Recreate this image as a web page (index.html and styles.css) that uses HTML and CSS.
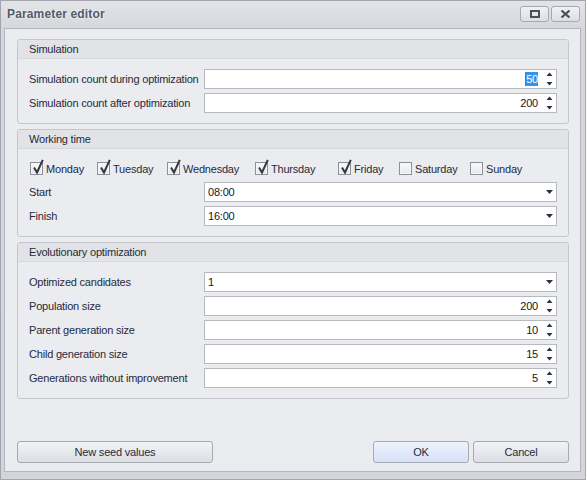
FILE: index.html
```html
<!DOCTYPE html>
<html>
<head>
<meta charset="utf-8">
<title>Parameter editor</title>
<link rel="stylesheet" href="styles.css">
</head>
<body>
<div class="window">
  <div class="titlebar">
    <span class="title">Parameter editor</span>
    <div class="tbuttons">
      <div class="tbtn"><svg width="10" height="8" viewBox="0 0 10 8"><rect x="1" y="1" width="8" height="6" fill="none" stroke="#4c515c" stroke-width="2"/></svg></div>
      <div class="tbtn"><svg width="11" height="8" viewBox="0 0 11 8"><path d="M1.5 0.5 L9.5 7.5 M9.5 0.5 L1.5 7.5" stroke="#4c515c" stroke-width="2.2" fill="none"/></svg></div>
    </div>
  </div>
  <div class="client">
    <section class="group">
      <div class="group-header">Simulation</div>
      <div class="group-body">
        <div class="row">
          <label class="lbl">Simulation count during optimization</label>
          <div class="field">
            <span class="value num"><span class="sel">50</span></span>
            <span class="spin"><svg width="7" height="14" viewBox="0 0 7 14"><path d="M3.5 0.5 L6.5 4 L0.5 4 Z M0.5 10 L6.5 10 L3.5 13.5 Z" fill="#2e323a"/></svg></span>
          </div>
        </div>
        <div class="row">
          <label class="lbl">Simulation count after optimization</label>
          <div class="field">
            <span class="value num">200</span>
            <span class="spin"><svg width="7" height="14" viewBox="0 0 7 14"><path d="M3.5 0.5 L6.5 4 L0.5 4 Z M0.5 10 L6.5 10 L3.5 13.5 Z" fill="#2e323a"/></svg></span>
          </div>
        </div>
      </div>
    </section>

    <section class="group">
      <div class="group-header">Working time</div>
      <div class="group-body">
        <div class="days">
          <div class="check on"><span class="box"></span><svg class="tick" width="16" height="16" viewBox="0 0 16 16"><path d="M4 8.5 L7 13.5 L12.8 0.8" stroke="#353942" stroke-width="2" fill="none"/></svg><span>Monday</span></div>
          <div class="check on"><span class="box"></span><svg class="tick" width="16" height="16" viewBox="0 0 16 16"><path d="M4 8.5 L7 13.5 L12.8 0.8" stroke="#353942" stroke-width="2" fill="none"/></svg><span>Tuesday</span></div>
          <div class="check on"><span class="box"></span><svg class="tick" width="16" height="16" viewBox="0 0 16 16"><path d="M4 8.5 L7 13.5 L12.8 0.8" stroke="#353942" stroke-width="2" fill="none"/></svg><span>Wednesday</span></div>
          <div class="check on"><span class="box"></span><svg class="tick" width="16" height="16" viewBox="0 0 16 16"><path d="M4 8.5 L7 13.5 L12.8 0.8" stroke="#353942" stroke-width="2" fill="none"/></svg><span>Thursday</span></div>
          <div class="check on"><span class="box"></span><svg class="tick" width="16" height="16" viewBox="0 0 16 16"><path d="M4 8.5 L7 13.5 L12.8 0.8" stroke="#353942" stroke-width="2" fill="none"/></svg><span>Friday</span></div>
          <div class="check"><span class="box"></span><span>Saturday</span></div>
          <div class="check"><span class="box"></span><span>Sunday</span></div>
        </div>
        <div class="row">
          <label class="lbl">Start</label>
          <div class="field">
            <span class="value">08:00</span>
            <span class="drop"><svg width="7" height="4" viewBox="0 0 7 4"><path d="M0 0 L7 0 L3.5 4 Z" fill="#2e323a"/></svg></span>
          </div>
        </div>
        <div class="row">
          <label class="lbl">Finish</label>
          <div class="field">
            <span class="value">16:00</span>
            <span class="drop"><svg width="7" height="4" viewBox="0 0 7 4"><path d="M0 0 L7 0 L3.5 4 Z" fill="#2e323a"/></svg></span>
          </div>
        </div>
      </div>
    </section>

    <section class="group">
      <div class="group-header">Evolutionary optimization</div>
      <div class="group-body">
        <div class="row">
          <label class="lbl">Optimized candidates</label>
          <div class="field">
            <span class="value">1</span>
            <span class="drop"><svg width="7" height="4" viewBox="0 0 7 4"><path d="M0 0 L7 0 L3.5 4 Z" fill="#2e323a"/></svg></span>
          </div>
        </div>
        <div class="row">
          <label class="lbl">Population size</label>
          <div class="field">
            <span class="value num">200</span>
            <span class="spin"><svg width="7" height="14" viewBox="0 0 7 14"><path d="M3.5 0.5 L6.5 4 L0.5 4 Z M0.5 10 L6.5 10 L3.5 13.5 Z" fill="#2e323a"/></svg></span>
          </div>
        </div>
        <div class="row">
          <label class="lbl">Parent generation size</label>
          <div class="field">
            <span class="value num">10</span>
            <span class="spin"><svg width="7" height="14" viewBox="0 0 7 14"><path d="M3.5 0.5 L6.5 4 L0.5 4 Z M0.5 10 L6.5 10 L3.5 13.5 Z" fill="#2e323a"/></svg></span>
          </div>
        </div>
        <div class="row">
          <label class="lbl">Child generation size</label>
          <div class="field">
            <span class="value num">15</span>
            <span class="spin"><svg width="7" height="14" viewBox="0 0 7 14"><path d="M3.5 0.5 L6.5 4 L0.5 4 Z M0.5 10 L6.5 10 L3.5 13.5 Z" fill="#2e323a"/></svg></span>
          </div>
        </div>
        <div class="row">
          <label class="lbl">Generations without improvement</label>
          <div class="field">
            <span class="value num">5</span>
            <span class="spin"><svg width="7" height="14" viewBox="0 0 7 14"><path d="M3.5 0.5 L6.5 4 L0.5 4 Z M0.5 10 L6.5 10 L3.5 13.5 Z" fill="#2e323a"/></svg></span>
          </div>
        </div>
      </div>
    </section>

    <div class="buttons">
      <button class="btn seed">New seed values</button>
      <div class="spacer"></div>
      <button class="btn ok">OK</button>
      <button class="btn cancel">Cancel</button>
    </div>
  </div>
</div>
</body>
</html>
```

FILE: styles.css
```css
* { box-sizing: border-box; }

html, body {
  margin: 0;
  padding: 0;
  background: #d4d6db;
}

body {
  font-family: "Liberation Sans", Arial, sans-serif;
  font-size: 11px;
  letter-spacing: -0.2px;
  color: #1f2b40;
}

.window {
  width: 586px;
  height: 480px;
  border: 1px solid #a3a6ae;
  background: linear-gradient(#e2e4e8, #d5d7dc 28px, #d3d5da);
  padding: 0 4px 7px 3px;
  display: flex;
  flex-direction: column;
}

.titlebar {
  height: 27px;
  flex: none;
  display: flex;
  align-items: flex-start;
  padding: 0 1px 0 3px;
}

.title {
  font-size: 12px;
  font-weight: bold;
  letter-spacing: 0.15px;
  color: #535a69;
  line-height: 27px;
  text-shadow: 0 0 3px rgba(255,255,255,0.9);
}

.tbuttons {
  margin-left: auto;
  margin-top: 5px;
  display: flex;
  gap: 2px;
}

.tbtn {
  width: 29px;
  height: 16px;
  border: 1px solid #a5a9b1;
  border-radius: 3px;
  background: linear-gradient(#f1f2f4, #dcdee3);
  display: flex;
  align-items: center;
  justify-content: center;
}

.client {
  flex: 1;
  border: 1px solid #b3b6bd;
  background: #ebecef;
  padding: 10px 11px 8px 12px;
  display: flex;
  flex-direction: column;
}

.group {
  border: 1px solid #c5c7cd;
  border-radius: 3px;
  background: #ebecef;
  margin-bottom: 5px;
  overflow: hidden;
}

.group-header {
  height: 19px;
  line-height: 18px;
  padding-left: 11px;
  background: #e2e3e7;
  border-bottom: 1px solid #d6d8dc;
  color: #232c3b;
}

.group-body {
  padding: 10px 11px;
  display: flex;
  flex-direction: column;
  gap: 4px;
}

.row {
  display: grid;
  grid-template-columns: 175px 1fr;
  align-items: center;
  height: 20px;
}

.lbl {
  white-space: nowrap;
}

.field {
  height: 20px;
  border: 1px solid #b6b9bf;
  background: #ffffff;
  display: flex;
  align-items: center;
  color: #101828;
}

.value {
  flex: 1;
  padding-left: 3px;
  white-space: nowrap;
}

.value.num {
  text-align: right;
  padding-right: 0;
}

.sel {
  background: #3391f0;
  color: #ffffff;
  border-left: 1px solid #a86b2a;
  padding: 1px 0 1px 0;
}

.spin {
  width: 18px;
  height: 14px;
  padding-left: 8px;
  display: flex;
}

.drop {
  width: 18px;
  height: 4px;
  padding-left: 8px;
  display: flex;
}

.days {
  display: grid;
  grid-template-columns: 67px 70px 88px 83px 61px 71px auto;
  height: 19px;
  align-items: center;
  padding-left: 1px;
}

.check {
  position: relative;
  display: flex;
  align-items: center;
  gap: 3px;
  white-space: nowrap;
}

.box {
  width: 13px;
  height: 13px;
  border: 1px solid #8e9199;
  background: linear-gradient(#fbfbfc, #e6e7eb);
  box-shadow: inset 0 0 0 1px #f4f5f7;
}

.tick {
  position: absolute;
  left: 0;
  top: -3px;
}

.buttons {
  margin-top: auto;
  display: flex;
  gap: 4px;
  height: 22px;
}

.spacer {
  flex: 1;
}

.btn {
  font-family: "Liberation Sans", Arial, sans-serif;
  font-size: 11px;
  letter-spacing: -0.2px;
  color: #1f2b40;
  height: 22px;
  border: 1px solid #a7aab1;
  border-radius: 3px;
  background: linear-gradient(#f2f3f5, #dcdee3);
  padding: 0;
}

.btn.seed { width: 196px; }
.btn.ok { width: 96px; background: linear-gradient(#eef3fd, #d6e0f7); }
.btn.cancel { width: 96px; }
```
